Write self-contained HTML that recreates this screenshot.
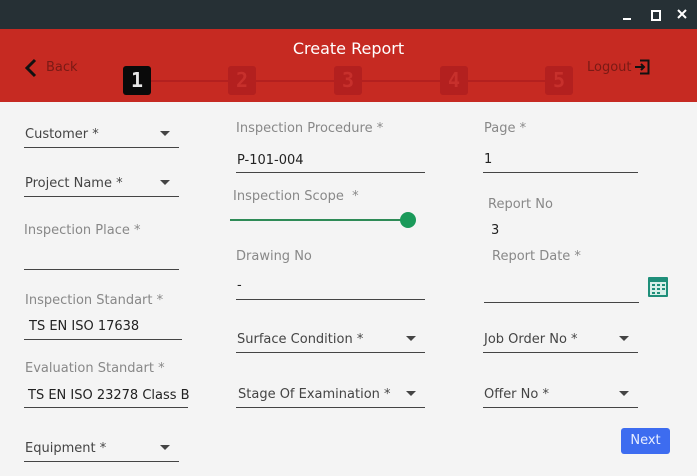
<!DOCTYPE html>
<html><head><style>
body{margin:0;width:697px;height:476px;overflow:hidden;background:#f4f4f4;font-family:"DejaVu Sans","Liberation Sans",sans-serif;position:relative}
.a{position:absolute}
.t{position:absolute;font-size:13px;color:#444;white-space:nowrap;margin-top:2px}
.l{position:absolute;font-size:13px;color:#888;white-space:nowrap;margin-top:2px}
.u{position:absolute;height:1px;background:#444}
.dd{position:absolute;width:0;height:0;border-left:5px solid transparent;border-right:5px solid transparent;border-top:5px solid #444}
.st{position:absolute;top:66px;width:28px;height:29px;border-radius:3px;background:#b3201f;color:#c7302c;font:bold 20px "DejaVu Sans Mono",monospace;text-align:center;line-height:29px}
.ln{position:absolute;top:80px;height:2px;background:#b3201f}
</style></head><body>
<div class="a" style="left:0;top:0;width:697px;height:29px;background:#263035"></div>
<div class="a" style="left:623px;top:18px;width:8px;height:2px;background:#fff"></div>
<div class="a" style="left:651px;top:10px;width:6px;height:7px;border:2px solid #fff"></div>
<svg class="a" style="left:677px;top:9px" width="10" height="10"><path d="M1 1 L9 9 M9 1 L1 9" stroke="#fff" stroke-width="2"/></svg>
<div class="a" style="left:0;top:29px;width:697px;height:73px;background:#c62a22"></div>
<div class="a" style="left:0;width:697px;text-align:center;color:#fff;font-size:16px;top:39px">Create Report</div>
<svg class="a" style="left:24px;top:58px" width="14" height="20"><path d="M11 2 L3 10 L11 18" stroke="#111" stroke-width="3" fill="none"/></svg>
<div class="a" style="left:46px;top:60px;font-size:13px;color:#7a1a15">Back</div>
<div class="a" style="left:587px;top:60px;font-size:13px;color:#7a1a15">Logout</div>
<svg class="a" style="left:634px;top:59px" width="16" height="16"><path d="M6 1.5 H14.5 V14.5 H6" stroke="#111" stroke-width="2" fill="none"/><path d="M1 8 H10 M7 5 L10 8 L7 11" stroke="#111" stroke-width="2" fill="none"/></svg>
<div class="ln" style="left:151px;width:77px"></div>
<div class="ln" style="left:256px;width:78px"></div>
<div class="ln" style="left:362px;width:78px"></div>
<div class="ln" style="left:468px;width:77px"></div>
<div class="st" style="left:123px;background:#0a0a0a;color:#e8e8e8">1</div>
<div class="st" style="left:228px">2</div>
<div class="st" style="left:334px">3</div>
<div class="st" style="left:440px">4</div>
<div class="st" style="left:545px">5</div>

<div class="t" style="left:25px;top:125px">Customer *</div><div class="dd" style="left:160px;top:131px"></div><div class="u" style="left:24px;top:147px;width:155px"></div>
<div class="t" style="left:25px;top:174px">Project Name *</div><div class="dd" style="left:160px;top:180px"></div><div class="u" style="left:24px;top:196px;width:155px"></div>
<div class="l" style="left:24px;top:221px">Inspection Place *</div><div class="u" style="left:24px;top:269px;width:155px"></div>
<div class="l" style="left:25px;top:291px">Inspection Standart *</div><div class="t" style="left:29px;top:317px;color:#222">TS EN ISO 17638</div><div class="u" style="left:24px;top:339px;width:158px"></div>
<div class="l" style="left:25px;top:359px">Evaluation Standart *</div><div class="t" style="left:28px;top:386px;color:#222">TS EN ISO 23278 Class B</div><div class="u" style="left:24px;top:407px;width:164px"></div>
<div class="t" style="left:25px;top:439px">Equipment *</div><div class="dd" style="left:160px;top:445px"></div><div class="u" style="left:24px;top:461px;width:155px"></div>

<div class="l" style="left:236px;top:119px">Inspection Procedure *</div><div class="t" style="left:237px;top:151px;color:#222">P-101-004</div><div class="u" style="left:236px;top:172px;width:189px"></div>
<div class="l" style="left:233px;top:187px">Inspection Scope &nbsp;*</div>
<div class="a" style="left:230px;top:219px;width:176px;height:2px;background:#2e8b57"></div><div class="a" style="left:400px;top:212px;width:16px;height:16px;border-radius:50%;background:#1a9a5a"></div>
<div class="l" style="left:236px;top:247px">Drawing No</div><div class="t" style="left:237px;top:276px;color:#222">-</div><div class="u" style="left:236px;top:299px;width:189px"></div>
<div class="t" style="left:237px;top:330px">Surface Condition *</div><div class="dd" style="left:406px;top:336px"></div><div class="u" style="left:236px;top:352px;width:189px"></div>
<div class="t" style="left:238px;top:385px">Stage Of Examination *</div><div class="dd" style="left:406px;top:391px"></div><div class="u" style="left:236px;top:407px;width:189px"></div>

<div class="l" style="left:484px;top:119px">Page *</div><div class="t" style="left:484px;top:150px;color:#222">1</div><div class="u" style="left:483px;top:172px;width:155px"></div>
<div class="l" style="left:488px;top:195px">Report No</div><div class="t" style="left:491px;top:221px;color:#222">3</div>
<div class="l" style="left:492px;top:247px">Report Date *</div><div class="u" style="left:484px;top:302px;width:155px"></div>
<svg class="a" style="left:648px;top:276px" width="20" height="21"><rect x="0" y="1" width="20" height="20" rx="1" fill="#1f8f7a"/><rect x="2" y="6" width="16" height="13" fill="#d8efe9"/><g fill="#1f8f7a"><rect x="4" y="8" width="3" height="2"/><rect x="9" y="8" width="3" height="2"/><rect x="14" y="8" width="3" height="2"/><rect x="4" y="12" width="3" height="2"/><rect x="9" y="12" width="3" height="2"/><rect x="14" y="12" width="3" height="2"/><rect x="4" y="16" width="3" height="2"/><rect x="9" y="16" width="3" height="2"/></g></svg>
<div class="t" style="left:484px;top:330px">Job Order No *</div><div class="dd" style="left:619px;top:336px"></div><div class="u" style="left:483px;top:352px;width:155px"></div>
<div class="t" style="left:484px;top:385px">Offer No *</div><div class="dd" style="left:619px;top:391px"></div><div class="u" style="left:483px;top:407px;width:155px"></div>
<div class="a" style="left:621px;top:428px;width:49px;height:26px;border-radius:3px;background:#3d6cf0;color:#e8eeff;font-size:13px;text-align:center;line-height:26px">Next</div>
</body></html>
